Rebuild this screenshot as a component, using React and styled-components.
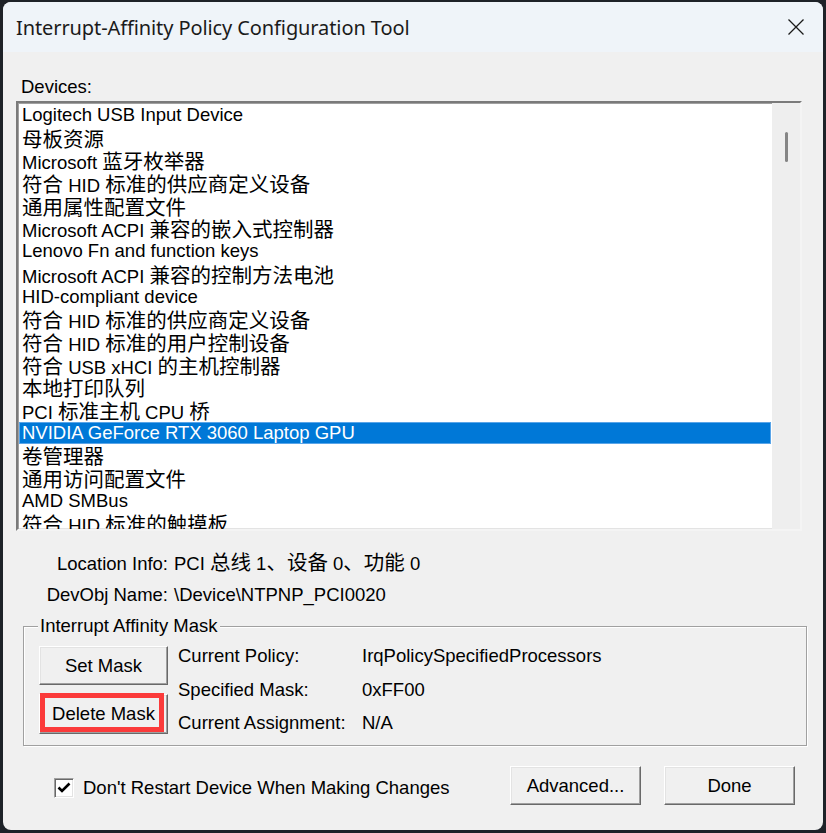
import React from "react";
import styled, { createGlobalStyle } from "styled-components";

const Global = createGlobalStyle`
  html, body { margin: 0; padding: 0; background: #1e2228; }
  body { width: 826px; height: 833px; overflow: hidden; }
  * { box-sizing: border-box; }
`;

const Desk = styled.div`
  width: 826px;
  height: 833px;
  padding: 2px 3px 3px 3px;
  background: #1e2228;
`;

const Window = styled.div`
  width: 820px;
  height: 828px;
  border-radius: 8px;
  overflow: hidden;
  background: #f0f0f0;
  display: flex;
  flex-direction: column;
  font-family: "Liberation Sans", Arial, "Noto Sans CJK SC", sans-serif;
  font-size: 18.5px;
  color: #000;
`;

const TitleBar = styled.div`
  height: 50px;
  flex: none;
  background: #eff4f9;
  display: flex;
  align-items: center;
  justify-content: space-between;
  padding: 0 16px 0 13px;
`;

const Title = styled.div`
  font-family: "Noto Sans", "Open Sans", sans-serif;
  font-size: 20px;
  color: #1b1b1b;
  letter-spacing: -0.1px;
  margin-top: 1px;
`;

const CloseBtn = styled.div`
  width: 22px;
  height: 22px;
  display: flex;
  align-items: center;
  justify-content: center;
`;

const Content = styled.div`
  flex: 1;
  display: flex;
  flex-direction: column;
  padding: 0 21px 0 13px;
`;

const SectionLabel = styled.div`
  margin: 24px 0 0 5px;
  line-height: 22px;
  height: 22px;
`;

const ListBox = styled.div`
  margin-top: 3px;
  height: 430px;
  width: 786px;
  background: #fff;
  border-style: solid;
  border-width: 2px;
  border-color: #7a7a7a #f4f4f4 #f4f4f4 #7a7a7a;
  box-shadow: inset 1px 1px 0 #a0a0a0, inset -1px -1px 0 #e3e3e3;
  display: flex;
  overflow: hidden;
`;

const Rows = styled.div`
  flex: 1;
  padding: 1px 1px 0 1px;
  overflow: hidden;
`;

const Row = styled.div`
  height: 22.7px;
  line-height: 22.7px;
  padding-left: 3px;
  white-space: nowrap;
  overflow: hidden;
  background: ${(p) => (p.$selected ? "#0078d7" : "transparent")};
  color: ${(p) => (p.$selected ? "#fff" : "#000")};
  box-shadow: ${(p) => (p.$selected ? "inset 0 0 0 1px #5aa5e8" : "none")};
`;

const Han = styled.span`
  font-family: "Noto Sans CJK SC", sans-serif;
  font-size: 20.5px;
  line-height: ${(p) => (p.$tight ? "0" : "inherit")};
`;

const ScrollTrack = styled.div`
  width: 28px;
  flex: none;
  background: #eeeeee;
  padding: 29px 0 0 13px;
`;

const Thumb = styled.div`
  width: 3px;
  height: 30px;
  border-radius: 2px;
  background: #858585;
`;

const InfoGrid = styled.div`
  margin-top: 22px;
  display: grid;
  grid-template-columns: 152px auto;
  column-gap: 6px;
  row-gap: 9px;
  line-height: 22px;
`;

const InfoLabel = styled.div`
  text-align: right;
  white-space: nowrap;
  height: 22px;
`;

const InfoValue = styled.div`
  white-space: nowrap;
  height: 22px;
`;

const Group = styled.fieldset`
  margin: 9px 0 0 7px;
  width: 784px;
  border: 1px solid #a0a0a0;
  box-shadow: inset 1px 1px 0 #fff, 1px 1px 0 #fff;
  padding: 9px 10px 11px 15px;
  display: flex;
  gap: 10px;
  min-width: 0;
`;

const Legend = styled.legend`
  padding: 0 2px;
  margin-left: -1px;
  line-height: 22px;
  background: #f0f0f0;
  position: relative;
`;

const ButtonCol = styled.div`
  display: flex;
  flex-direction: column;
  gap: 9px;
`;

const Button = styled.div`
  width: ${(p) => p.$w || 129}px;
  height: ${(p) => p.$h || 39}px;
  background: #f0f0f0;
  border: 1px solid;
  border-color: #ffffff #696969 #696969 #ffffff;
  box-shadow: inset -1px -1px 0 #a0a0a0, inset 1px 1px 0 #e3e3e3;
  display: flex;
  align-items: center;
  justify-content: center;
  white-space: nowrap;
  position: relative;
`;

const Highlight = styled.div`
  position: absolute;
  left: 0px;
  top: -2px;
  right: 3px;
  bottom: 1px;
  border: 5px solid #fb3a3a;
  pointer-events: none;
`;

const StatusGrid = styled.div`
  margin-top: -1px;
  display: grid;
  grid-template-columns: 184px auto;
  row-gap: 11.5px;
  line-height: 22px;
  align-content: start;
`;

const BottomRow = styled.div`
  margin-top: 20px;
  display: flex;
  align-items: center;
  padding-left: 38px;
  margin-right: 7px;
`;

const Check = styled.div`
  width: 20px;
  height: 20px;
  flex: none;
  background: #fff;
  border: 1px solid;
  border-color: #a0a0a0 #ffffff #ffffff #a0a0a0;
  box-shadow: inset 1px 1px 0 #696969, inset -1px -1px 0 #e3e3e3;
  display: flex;
  align-items: center;
  justify-content: center;
  margin-top: 5px;
`;

const CheckLabel = styled.div`
  margin-left: 9px;
  margin-top: 5px;
  white-space: nowrap;
`;

const Actions = styled.div`
  margin-left: auto;
  display: flex;
  gap: 23px;
`;

const CJK = /([\u3000-\u303f\u3400-\u9fff\uff00-\uffef]+)/;

function T({ children, tight }) {
  const parts = String(children).split(CJK);
  return parts.map((s, i) =>
    i % 2 === 1 ? (
      <Han key={i} $tight={tight}>
        {s}
      </Han>
    ) : (
      <React.Fragment key={i}>{s}</React.Fragment>
    )
  );
}

const devices = [
  "Logitech USB Input Device",
  "母板资源",
  "Microsoft 蓝牙枚举器",
  "符合 HID 标准的供应商定义设备",
  "通用属性配置文件",
  "Microsoft ACPI 兼容的嵌入式控制器",
  "Lenovo Fn and function keys",
  "Microsoft ACPI 兼容的控制方法电池",
  "HID-compliant device",
  "符合 HID 标准的供应商定义设备",
  "符合 HID 标准的用户控制设备",
  "符合 USB xHCI 的主机控制器",
  "本地打印队列",
  "PCI 标准主机 CPU 桥",
  "NVIDIA GeForce RTX 3060 Laptop GPU",
  "卷管理器",
  "通用访问配置文件",
  "AMD SMBus",
  "符合 HID 标准的触摸板",
];

export default function App() {
  return (
    <Desk>
      <Global />
      <Window>
        <TitleBar>
          <Title>Interrupt-Affinity Policy Configuration Tool</Title>
          <CloseBtn>
            <svg width="16" height="16" viewBox="0 0 16 16">
              <path d="M0.5 0.5L15.5 15.5M15.5 0.5L0.5 15.5" stroke="#1a1a1a" strokeWidth="1.3" fill="none" />
            </svg>
          </CloseBtn>
        </TitleBar>
        <Content>
          <SectionLabel>Devices:</SectionLabel>
          <ListBox>
            <Rows>
              {devices.map((d, i) => (
                <Row key={i} $selected={i === 14}>
                  <T>{d}</T>
                </Row>
              ))}
            </Rows>
            <ScrollTrack>
              <Thumb />
            </ScrollTrack>
          </ListBox>
          <InfoGrid>
            <InfoLabel>Location Info:</InfoLabel>
            <InfoValue>
              <T tight>PCI 总线 1、设备 0、功能 0</T>
            </InfoValue>
            <InfoLabel>DevObj Name:</InfoLabel>
            <InfoValue>\Device\NTPNP_PCI0020</InfoValue>
          </InfoGrid>
          <Group>
            <Legend>Interrupt Affinity Mask</Legend>
            <ButtonCol>
              <Button>Set Mask</Button>
              <Button $h={40}>
                Delete Mask
                <Highlight />
              </Button>
            </ButtonCol>
            <StatusGrid>
              <div>Current Policy:</div>
              <div>IrqPolicySpecifiedProcessors</div>
              <div>Specified Mask:</div>
              <div>0xFF00</div>
              <div>Current Assignment:</div>
              <div>N/A</div>
            </StatusGrid>
          </Group>
          <BottomRow>
            <Check>
              <svg width="14" height="12" viewBox="0 0 14 12">
                <path d="M1.5 5.5L5 9L12.5 1.5" stroke="#000" strokeWidth="2.6" fill="none" />
              </svg>
            </Check>
            <CheckLabel>Don't Restart Device When Making Changes</CheckLabel>
            <Actions>
              <Button $w={131}>Advanced...</Button>
              <Button $w={131}>Done</Button>
            </Actions>
          </BottomRow>
        </Content>
      </Window>
    </Desk>
  );
}
